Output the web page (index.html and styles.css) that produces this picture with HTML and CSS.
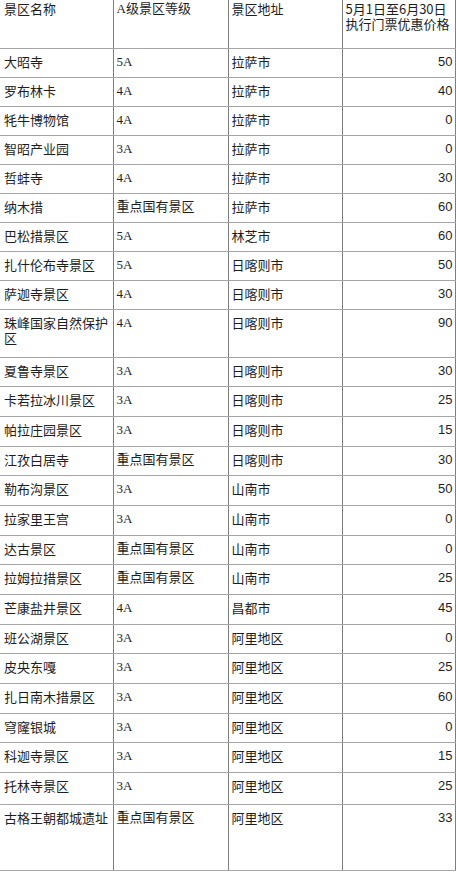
FILE: index.html
```html
<!DOCTYPE html>
<html lang="zh-CN">
<head>
<meta charset="utf-8">
<title>景区门票优惠价格</title>
<link rel="stylesheet" href="styles.css">
</head>
<body>
<table class="price-table">
  <colgroup>
    <col class="c-name"><col class="c-level"><col class="c-addr"><col class="c-price">
  </colgroup>
  <tr class="r-head">
    <td>景区名称</td><td class="lvl">A级景区等级</td><td>景区地址</td><td>5月1日至6月30日执行门票优惠价格</td>
  </tr>
  <tr class="r-a"><td>大昭寺</td><td class="lvl">5A</td><td>拉萨市</td><td class="num">50</td></tr>
  <tr class="r-a"><td>罗布林卡</td><td class="lvl">4A</td><td>拉萨市</td><td class="num">40</td></tr>
  <tr class="r-a"><td>牦牛博物馆</td><td class="lvl">4A</td><td>拉萨市</td><td class="num">0</td></tr>
  <tr class="r-a"><td>智昭产业园</td><td class="lvl">3A</td><td>拉萨市</td><td class="num">0</td></tr>
  <tr class="r-a"><td>哲蚌寺</td><td class="lvl">4A</td><td>拉萨市</td><td class="num">30</td></tr>
  <tr class="r-a"><td>纳木措</td><td class="lvl">重点国有景区</td><td>拉萨市</td><td class="num">60</td></tr>
  <tr class="r-a"><td>巴松措景区</td><td class="lvl">5A</td><td>林芝市</td><td class="num">60</td></tr>
  <tr class="r-a"><td>扎什伦布寺景区</td><td class="lvl">5A</td><td>日喀则市</td><td class="num">50</td></tr>
  <tr class="r-a"><td>萨迦寺景区</td><td class="lvl">4A</td><td>日喀则市</td><td class="num">30</td></tr>
  <tr class="r-tall"><td>珠峰国家自然保护区</td><td class="lvl">4A</td><td>日喀则市</td><td class="num">90</td></tr>
  <tr class="r-b"><td>夏鲁寺景区</td><td class="lvl">3A</td><td>日喀则市</td><td class="num">30</td></tr>
  <tr class="r-b"><td>卡若拉冰川景区</td><td class="lvl">3A</td><td>日喀则市</td><td class="num">25</td></tr>
  <tr class="r-b"><td>帕拉庄园景区</td><td class="lvl">3A</td><td>日喀则市</td><td class="num">15</td></tr>
  <tr class="r-b"><td>江孜白居寺</td><td class="lvl">重点国有景区</td><td>日喀则市</td><td class="num">30</td></tr>
  <tr class="r-b"><td>勒布沟景区</td><td class="lvl">3A</td><td>山南市</td><td class="num">50</td></tr>
  <tr class="r-b"><td>拉家里王宫</td><td class="lvl">3A</td><td>山南市</td><td class="num">0</td></tr>
  <tr class="r-b"><td>达古景区</td><td class="lvl">重点国有景区</td><td>山南市</td><td class="num">0</td></tr>
  <tr class="r-b"><td>拉姆拉措景区</td><td class="lvl">重点国有景区</td><td>山南市</td><td class="num">25</td></tr>
  <tr class="r-b"><td>芒康盐井景区</td><td class="lvl">4A</td><td>昌都市</td><td class="num">45</td></tr>
  <tr class="r-b"><td>班公湖景区</td><td class="lvl">3A</td><td>阿里地区</td><td class="num">0</td></tr>
  <tr class="r-b"><td>皮央东嘎</td><td class="lvl">3A</td><td>阿里地区</td><td class="num">25</td></tr>
  <tr class="r-b"><td>扎日南木措景区</td><td class="lvl">3A</td><td>阿里地区</td><td class="num">60</td></tr>
  <tr class="r-b"><td>穹窿银城</td><td class="lvl">3A</td><td>阿里地区</td><td class="num">0</td></tr>
  <tr class="r-b"><td>科迦寺景区</td><td class="lvl">3A</td><td>阿里地区</td><td class="num">15</td></tr>
  <tr class="r-c"><td>托林寺景区</td><td class="lvl">3A</td><td>阿里地区</td><td class="num">25</td></tr>
  <tr class="r-last"><td>古格王朝都城遗址</td><td class="lvl">重点国有景区</td><td>阿里地区</td><td class="num">33</td></tr>
</table>
</body>
</html>
```

FILE: styles.css
```css
html, body {
  margin: 0;
  padding: 0;
  background: #ffffff;
}

body {
  font-family: "Noto Sans CJK SC", "Liberation Sans", sans-serif;
  font-size: 13px;
  line-height: 15px;
  color: #1e1e1e;
}

.price-table {
  border-collapse: collapse;
  table-layout: fixed;
  width: 455px;
}

.c-name { width: 113px; }
.c-level { width: 115px; }
.c-addr { width: 114px; }
.c-price { width: 113px; }

.price-table td {
  vertical-align: top;
  padding: 5px 3px 0 3px;
  border-bottom: 1px solid #a6a6a6;
  border-left: 1px solid #7e7e7e;
  border-right: 1px solid #7e7e7e;
  overflow: hidden;
  box-sizing: border-box;
}

.price-table td:first-child {
  border-left: none;
  padding-left: 4px;
}

.r-head td {
  padding-top: 1px;
  height: 48px;
}

.r-a td { height: 29px; }
.r-tall td { height: 48px; }
.r-b td { height: 29.7px; }
.r-c td { height: 32px; }
.r-last td { height: 66px; }

.lvl {
  font-family: "Liberation Serif", "Noto Sans CJK SC", serif;
}

.num {
  text-align: right;
  font-family: "Liberation Sans", "Noto Sans CJK SC", sans-serif;
  padding-right: 2px !important;
}
```
